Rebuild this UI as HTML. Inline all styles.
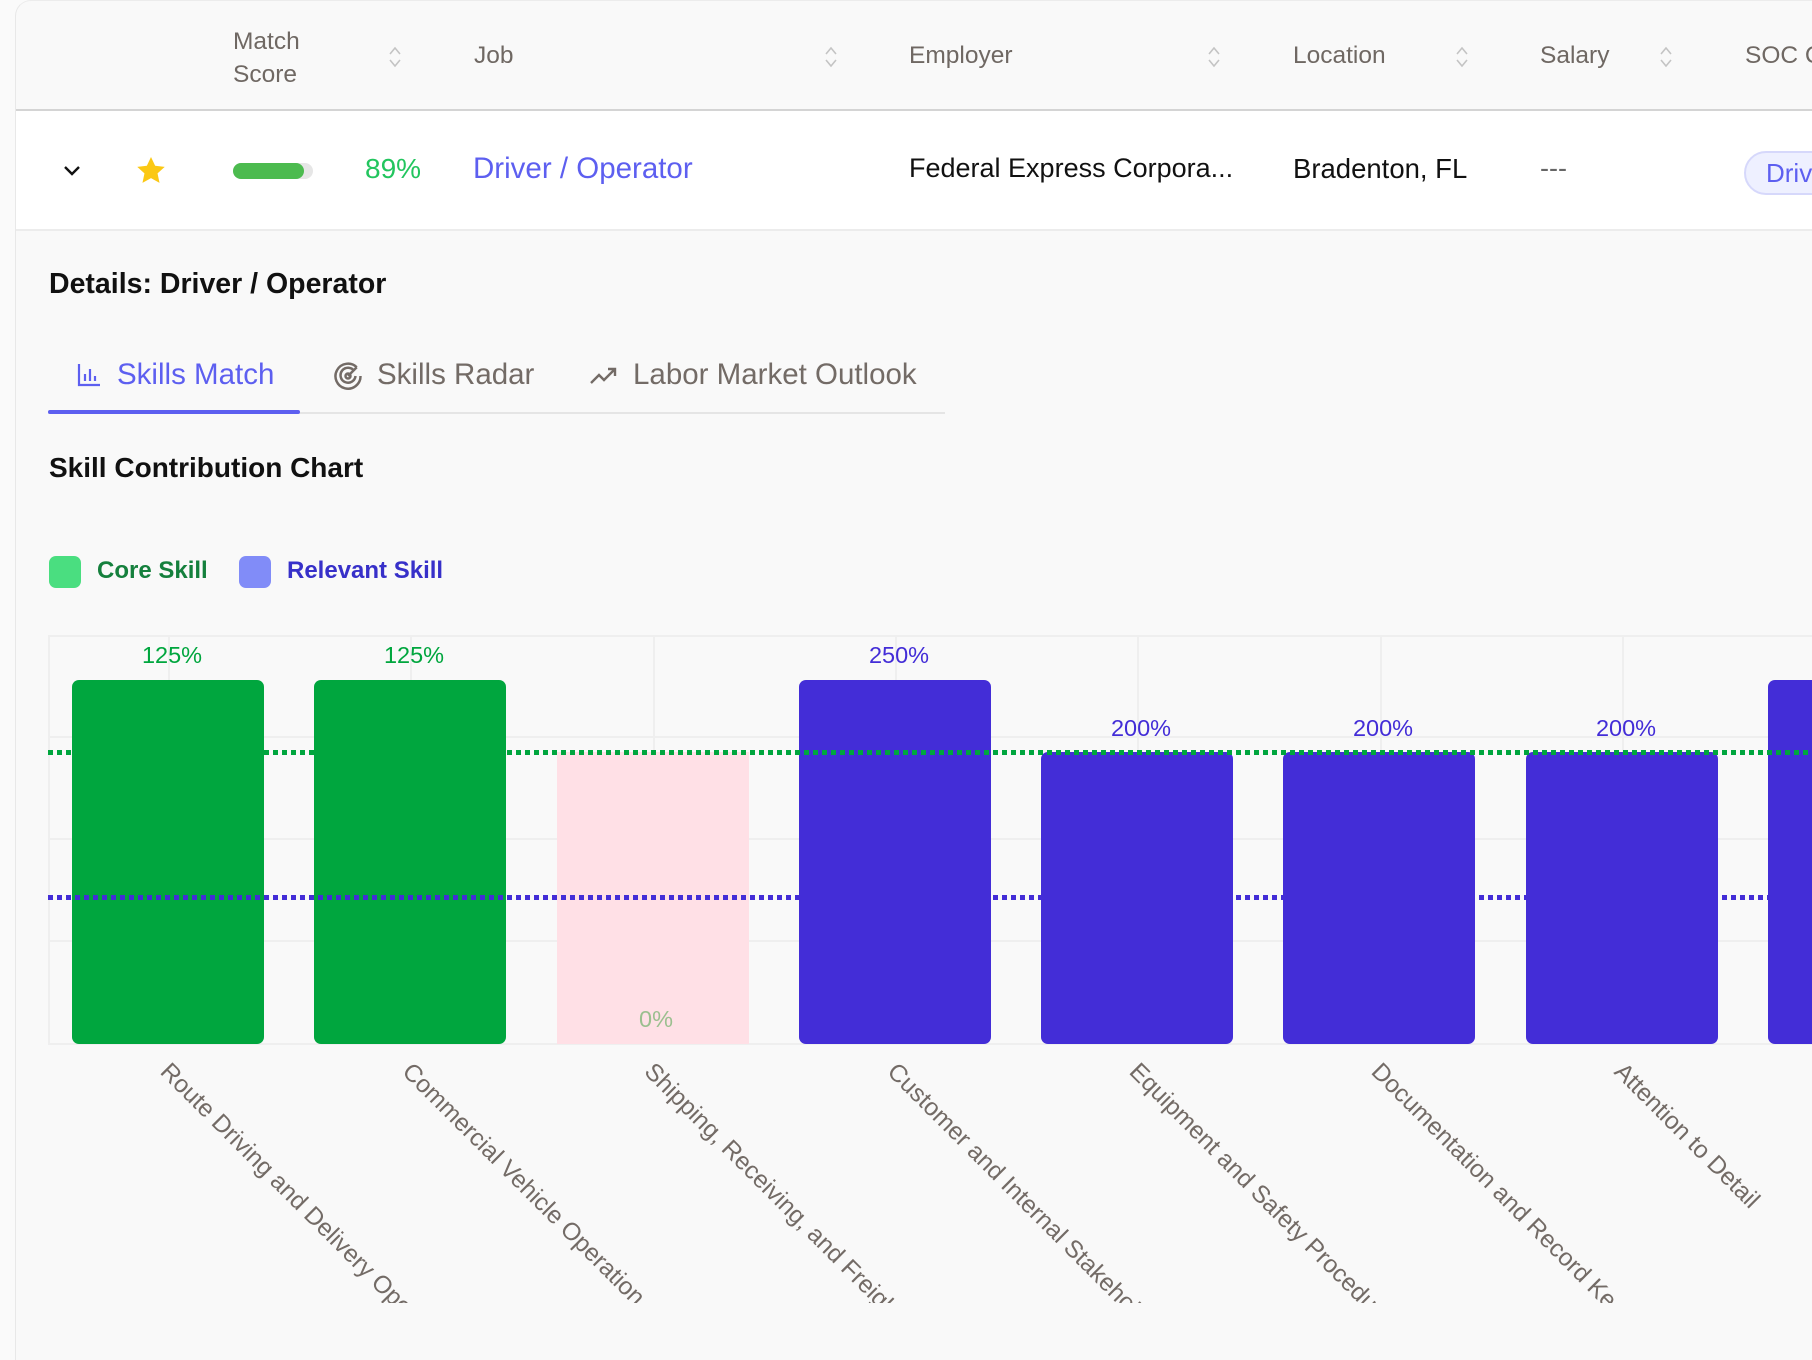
<!DOCTYPE html>
<html><head><meta charset="utf-8"><style>
*{box-sizing:border-box;margin:0;padding:0}
body{width:1812px;height:1360px;overflow:hidden;background:#fafafa;font-family:"Liberation Sans",sans-serif;position:relative}
.card{position:absolute;left:15px;top:0;width:1797px;height:1360px;border-left:1px solid #e8e8e8;border-top:1px solid #ececec;border-top-left-radius:16px;background:#f9f9f9;overflow:hidden}
.a{position:absolute;white-space:nowrap}
.h{color:#6f6863;font-size:24.5px}
.sort{position:absolute;width:14px;height:24px}
.row{position:absolute;left:0;top:108px;width:1797px;height:122px;background:#fff;border-top:2px solid #d4d4d4;border-bottom:2px solid #ececec;overflow:hidden}
.grid{position:absolute;background:#efefef}
.bar{position:absolute;border-radius:7px}
.lbl{position:absolute;font-size:23.5px;text-align:center;width:120px}
.xl{position:absolute;transform-origin:0 0;transform:rotate(45deg);font-size:24.5px;color:#736b66;white-space:nowrap}
.dg{position:absolute;left:48px;width:1764px;height:5px;background:repeating-linear-gradient(90deg,#00a63e 0 5px,transparent 5px 9px)}
.db{position:absolute;left:48px;width:1764px;height:5px;background:repeating-linear-gradient(90deg,#432dd7 0 5px,transparent 5px 9px)}
.chart{position:absolute;left:0;top:0;width:1812px;height:1360px;overflow:hidden}
</style></head><body>
<div class="card">
<div class="a h" style="left:217px;top:24px;line-height:33px">Match<br>Score</div>
<div class="a h" style="left:458px;top:41px">Job</div>
<div class="a h" style="left:893px;top:41px">Employer</div>
<div class="a h" style="left:1277px;top:41px">Location</div>
<div class="a h" style="left:1524px;top:41px">Salary</div>
<div class="a h" style="left:1729px;top:41px">SOC C</div>
<svg class="sort" style="left:372px;top:44px" viewBox="0 0 14 24"><path d="M2 9 7 3 12 9M2 15 7 21 12 15" fill="none" stroke="#c4c4c4" stroke-width="1.6"/></svg>
<svg class="sort" style="left:808px;top:44px" viewBox="0 0 14 24"><path d="M2 9 7 3 12 9M2 15 7 21 12 15" fill="none" stroke="#c4c4c4" stroke-width="1.6"/></svg>
<svg class="sort" style="left:1191px;top:44px" viewBox="0 0 14 24"><path d="M2 9 7 3 12 9M2 15 7 21 12 15" fill="none" stroke="#c4c4c4" stroke-width="1.6"/></svg>
<svg class="sort" style="left:1439px;top:44px" viewBox="0 0 14 24"><path d="M2 9 7 3 12 9M2 15 7 21 12 15" fill="none" stroke="#c4c4c4" stroke-width="1.6"/></svg>
<svg class="sort" style="left:1643px;top:44px" viewBox="0 0 14 24"><path d="M2 9 7 3 12 9M2 15 7 21 12 15" fill="none" stroke="#c4c4c4" stroke-width="1.6"/></svg>
<div class="row">
<svg class="a" style="left:46px;top:53px" width="20" height="14" viewBox="0 0 20 14"><path d="M3 3 10 10 17 3" fill="none" stroke="#111" stroke-width="2.4"/></svg>
<svg class="a" style="left:119px;top:44px" width="32" height="32" viewBox="0 0 24 24"><path d="M12 1.5l3.1 6.6 7.2.8-5.4 4.9 1.5 7.1L12 17.3 5.6 20.9l1.5-7.1L1.7 8.9l7.2-.8z" fill="#fbc814"/></svg>
<div class="a" style="left:217px;top:52px;width:80px;height:16px;border-radius:8px;background:#e6e6e6"><div style="width:71px;height:16px;border-radius:8px;background:#4cbb4f"></div></div>
<div class="a" style="left:349px;top:42px;font-size:28px;color:#22c55e">89%</div>
<div class="a" style="left:457px;top:41px;font-size:29.5px;color:#5d5ff0">Driver / Operator</div>
<div class="a" style="left:893px;top:42px;font-size:27px;color:#111">Federal Express Corpora...</div>
<div class="a" style="left:1277px;top:42px;font-size:27.5px;color:#111">Bradenton, FL</div>
<div class="a" style="left:1524px;top:42px;font-size:27px;color:#666">---</div>
<div class="a" style="left:1728px;top:40px;width:120px;height:44px;border-radius:22px;background:#eef0ff;border:2px solid #d6d8fb;color:#5d5ff0;font-size:26px;padding:5px 0 0 20px">Driver</div>
</div>
<div class="a" style="left:33px;top:267px;font-size:28.5px;font-weight:bold;color:#111">Details: Driver / Operator</div>
<svg class="a" style="left:60px;top:361px" width="26" height="26" viewBox="0 0 26 26"><path d="M3 2v21h21M9 19v-7M14 19V7M19 19v-5" fill="none" stroke="#5d5ff0" stroke-width="2.2"/></svg>
<div class="a" style="left:101px;top:357px;font-size:29.5px;color:#5d5ff0">Skills Match</div>
<svg class="a" style="left:317px;top:360px" width="30" height="30" viewBox="0 0 24 24"><g fill="none" stroke="#736b66" stroke-width="2"><path d="M19 5A10 10 0 1 0 22 12"/><path d="M17 8A6 6 0 1 0 18 12"/><circle cx="12" cy="12" r="2"/><path d="M12 12 19 5"/></g></svg>
<div class="a" style="left:361px;top:357px;font-size:29.5px;color:#736b66">Skills Radar</div>
<svg class="a" style="left:573px;top:363px" width="30" height="24" viewBox="0 0 30 24"><path d="M2 19 10 11 15 16 26 5M19 5h7v7" fill="none" stroke="#736b66" stroke-width="2.4"/></svg>
<div class="a" style="left:617px;top:357px;font-size:29.5px;color:#736b66">Labor Market Outlook</div>
<div class="a" style="left:32px;top:411px;width:897px;height:2px;background:#e5e5e5"></div>
<div class="a" style="left:32px;top:409px;width:252px;height:4px;border-radius:2px;background:#5d5ff0"></div>
<div class="a" style="left:33px;top:451px;font-size:28px;font-weight:bold;color:#111">Skill Contribution Chart</div>
<div class="a" style="left:33px;top:555px;width:32px;height:32px;border-radius:7px;background:#4ade80"></div>
<div class="a" style="left:81px;top:556px;font-size:24px;font-weight:bold;color:#15803d">Core Skill</div>
<div class="a" style="left:223px;top:555px;width:32px;height:32px;border-radius:7px;background:#818cf8"></div>
<div class="a" style="left:271px;top:556px;font-size:24px;font-weight:bold;color:#3730c9">Relevant Skill</div>
</div>
<div class="chart">
<div class="grid" style="left:48px;top:635px;width:1764px;height:2px"></div>
<div class="grid" style="left:48px;top:736px;width:1764px;height:2px"></div>
<div class="grid" style="left:48px;top:838px;width:1764px;height:2px"></div>
<div class="grid" style="left:48px;top:940px;width:1764px;height:2px"></div>
<div class="grid" style="left:48px;top:1043px;width:1764px;height:2px"></div>
<div class="grid" style="left:48px;top:636px;width:2px;height:408px"></div>
<div class="grid" style="left:168px;top:636px;width:2px;height:408px"></div>
<div class="grid" style="left:410px;top:636px;width:2px;height:408px"></div>
<div class="grid" style="left:653px;top:636px;width:2px;height:408px"></div>
<div class="grid" style="left:895px;top:636px;width:2px;height:408px"></div>
<div class="grid" style="left:1137px;top:636px;width:2px;height:408px"></div>
<div class="grid" style="left:1380px;top:636px;width:2px;height:408px"></div>
<div class="grid" style="left:1622px;top:636px;width:2px;height:408px"></div>
<div class="a" style="left:557px;top:752px;width:192px;height:292px;background:#ffe0e6"></div>
<div class="bar" style="left:72px;top:680px;width:192px;height:364px;background:#00a63e"></div>
<div class="bar" style="left:314px;top:680px;width:192px;height:364px;background:#00a63e"></div>
<div class="bar" style="left:799px;top:680px;width:192px;height:364px;background:#432dd7"></div>
<div class="db" style="top:895px"></div>
<div class="bar" style="left:1041px;top:752px;width:192px;height:292px;background:#432dd7"></div>
<div class="bar" style="left:1283px;top:752px;width:192px;height:292px;background:#432dd7"></div>
<div class="bar" style="left:1526px;top:752px;width:192px;height:292px;background:#432dd7"></div>
<div class="bar" style="left:1768px;top:680px;width:44px;height:364px;background:#432dd7;border-radius:7px 0 0 7px"></div>
<div class="dg" style="top:750px"></div>
<div class="lbl" style="left:112px;top:642px;color:#00a63e">125%</div>
<div class="lbl" style="left:354px;top:642px;color:#00a63e">125%</div>
<div class="lbl" style="left:596px;top:1006px;color:#9bbf8f">0%</div>
<div class="lbl" style="left:839px;top:642px;color:#432dd7">250%</div>
<div class="lbl" style="left:1081px;top:715px;color:#432dd7">200%</div>
<div class="lbl" style="left:1323px;top:715px;color:#432dd7">200%</div>
<div class="lbl" style="left:1566px;top:715px;color:#432dd7">200%</div>
<div class="a" style="left:0;top:1045px;width:1812px;height:258px;overflow:hidden">
<div class="xl" style="left:174px;top:13px">Route Driving and Delivery Operations</div>
<div class="xl" style="left:416px;top:13px">Commercial Vehicle Operation</div>
<div class="xl" style="left:658px;top:13px">Shipping, Receiving, and Freight Handling</div>
<div class="xl" style="left:901px;top:13px">Customer and Internal Stakeholder Communication</div>
<div class="xl" style="left:1143px;top:13px">Equipment and Safety Procedures</div>
<div class="xl" style="left:1385px;top:13px">Documentation and Record Keeping</div>
<div class="xl" style="left:1628px;top:13px">Attention to Detail</div>
</div>
</div>
</body></html>
